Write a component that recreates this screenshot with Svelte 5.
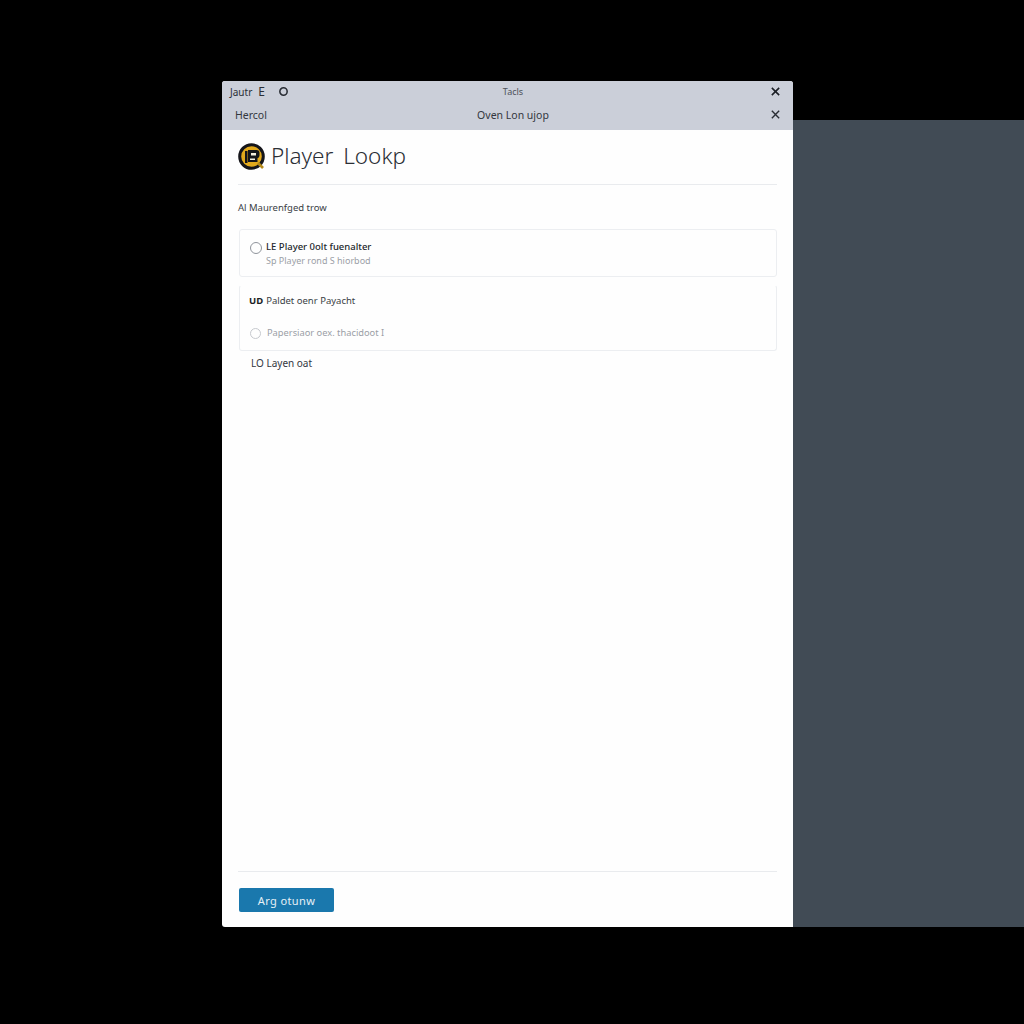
<script>
  let cards = [
    { title: 'LE Player 0olt fuenalter', note: 'Sp Player rond S hiorbod' }
  ];
</script>

<div class="stage">
  <section class="modal">
    <header class="chrome">
      <div class="bar bar-top">
        <div class="tools">
          <span>Jautr</span>
          <span class="tool-e">E</span>
          <svg class="tool-o" viewBox="0 0 12 12" width="11" height="11"><circle cx="6" cy="6" r="4" fill="none" stroke="#2a2e35" stroke-width="1.7" /></svg>
        </div>
        <span class="bar-title">Tacls</span>
        <svg class="close" viewBox="0 0 12 12" width="11" height="11"><path d="M2 2l8 8M10 2l-8 8" stroke="#1c2026" stroke-width="1.7" fill="none" /></svg>
      </div>
      <div class="bar bar-sub">
        <span class="crumb">Hercol</span>
        <span class="bar-heading">Oven Lon ujop</span>
        <svg class="close" viewBox="0 0 12 12" width="11" height="11"><path d="M2 2l8 8M10 2l-8 8" stroke="#2a2e35" stroke-width="1.5" fill="none" /></svg>
      </div>
    </header>

    <div class="content">
      <div class="title-row">
        <svg class="logo" viewBox="0 0 28 28" width="28" height="28">
          <circle cx="13.5" cy="13.5" r="11.8" fill="#e2a91c" stroke="#15151a" stroke-width="3" />
          <path d="M7 8h2.5v12H7z" fill="#15151a" />
          <path d="M10 7h8.5a3 3 0 0 1 3 3v2.5a3 3 0 0 1-2 2.8V19H10z" fill="#15151a" />
          <path d="M13 10h5v2.5h-5zM12 15.5h5V17h-5z" fill="#f4efe0" />
          <path d="M20 20l5 5" stroke="#b58a1a" stroke-width="2.6" />
        </svg>
        <h1>Player Lookp</h1>
      </div>

      <p class="section-label">Al Maurenfged trow</p>

      {#each cards as card}
        <div class="card card-first">
          <span class="radio"></span>
          <div class="card-text">
            <strong>{card.title}</strong>
            <small>{card.note}</small>
          </div>
        </div>
      {/each}

      <div class="card card-second">
        <div class="second-head">
          <b>UD</b>
          <span>Paldet oenr Payacht</span>
        </div>
        <div class="second-note">
          <span class="radio radio-small"></span>
          <small>Papersiaor oex. thacidoot I</small>
        </div>
      </div>

      <p class="after-card">LO Layen oat</p>

      <footer class="actions">
        <button type="button">Arg otunw</button>
      </footer>
    </div>
  </section>

  <aside class="side"></aside>
</div>

<style>
  :global(body) {
    background: #000;
  }

  .stage {
    display: flex;
    box-sizing: border-box;
    height: 1024px;
    padding: 81px 0 97px 222px;
    background: #000;
    font-family: "Noto Sans", "Liberation Sans", sans-serif;
  }

  .modal {
    display: flex;
    flex-direction: column;
    width: 571px;
    flex: none;
    background: #fefefe;
    border-radius: 3px 3px 0 3px;
    overflow: hidden;
  }

  .side {
    flex: 1;
    margin-top: 39px;
    background: #414b55;
  }

  .chrome {
    background: #cbcfd9;
    color: #33373e;
    font-size: 10px;
  }

  .bar {
    display: grid;
    grid-template-columns: 1fr auto 1fr;
    align-items: center;
    box-sizing: border-box;
  }

  .bar-top {
    height: 21px;
    padding: 0 12px 0 8px;
  }

  .bar-sub {
    height: 28px;
    padding: 0 12px 3px 13px;
  }

  .tools {
    display: flex;
    align-items: center;
    color: #2a2e35;
  }

  .tool-e {
    margin-left: 6px;
    font-size: 12px;
  }

  .tool-o {
    margin-left: 13px;
  }

  .bar-title {
    font-size: 9px;
    color: #4d525a;
    margin-left: 15px;
  }

  .bar-heading {
    font-size: 10.5px;
    margin-left: 10px;
  }

  .crumb {
    font-size: 10.5px;
  }

  .close {
    justify-self: end;
  }

  .content {
    display: flex;
    flex-direction: column;
    flex: 1;
    padding: 0 16px 15px 16px;
    color: #2c3036;
  }

  .title-row {
    display: flex;
    align-items: center;
    gap: 5px;
    height: 55px;
    box-sizing: border-box;
    padding-bottom: 1px;
    border-bottom: 1px solid #e9ebee;
  }

  .logo {
    flex: none;
    margin-top: 1px;
  }

  h1 {
    margin: 0;
    font-size: 22.5px;
    font-weight: 300;
    line-height: 1;
    color: #2b2f35;
    word-spacing: 4px;
  }

  .section-label {
    margin: 16px 0 14px;
    font-size: 9.5px;
    line-height: 14px;
    color: #3a3e45;
  }

  .card {
    box-sizing: border-box;
    margin-left: 1px;
    border: 1px solid #eceef1;
    border-radius: 3px;
  }

  .card-first {
    display: flex;
    align-items: flex-start;
    gap: 4px;
    height: 48px;
    padding: 11px 10px;
  }

  .radio {
    flex: none;
    box-sizing: border-box;
    width: 12px;
    height: 12px;
    margin-top: 1px;
    border: 1px solid #8f949b;
    border-radius: 50%;
  }

  .card-text {
    display: flex;
    flex-direction: column;
    gap: 2px;
  }

  strong {
    font-size: 9.5px;
    font-weight: 500;
    line-height: 12px;
    color: #24272c;
  }

  small {
    font-size: 9px;
    line-height: 12px;
    color: #9b9fa6;
  }

  .card-second {
    display: flex;
    flex-direction: column;
    justify-content: space-between;
    height: 66px;
    margin-top: 8px;
    padding: 8px 10px 11px 9px;
    border-top-color: transparent;
  }

  .second-head {
    display: flex;
    align-items: center;
    gap: 3px;
    font-size: 9.5px;
    line-height: 13px;
    color: #3a3e45;
  }

  .second-head b {
    color: #1c1f24;
  }

  .second-note {
    display: flex;
    align-items: center;
    gap: 6px;
    padding-left: 1px;
  }

  .second-note small {
    font-size: 9.3px;
  }

  .radio-small {
    width: 11px;
    height: 11px;
    margin-top: 0;
    border-color: #c6c9ce;
  }

  .after-card {
    margin: 6px 0 0 13px;
    font-size: 10px;
    line-height: 13px;
    color: #33373e;
  }

  .actions {
    margin-top: auto;
    padding-top: 16px;
    border-top: 1px solid #e9ebee;
  }

  button {
    display: block;
    width: 95px;
    height: 24px;
    margin-left: 1px;
    padding: 0;
    border: 0;
    border-radius: 2px;
    background: #1a78ad;
    color: #e6f0f6;
    font: inherit;
    font-size: 11px;
    letter-spacing: 0.4px;
  }
</style>
